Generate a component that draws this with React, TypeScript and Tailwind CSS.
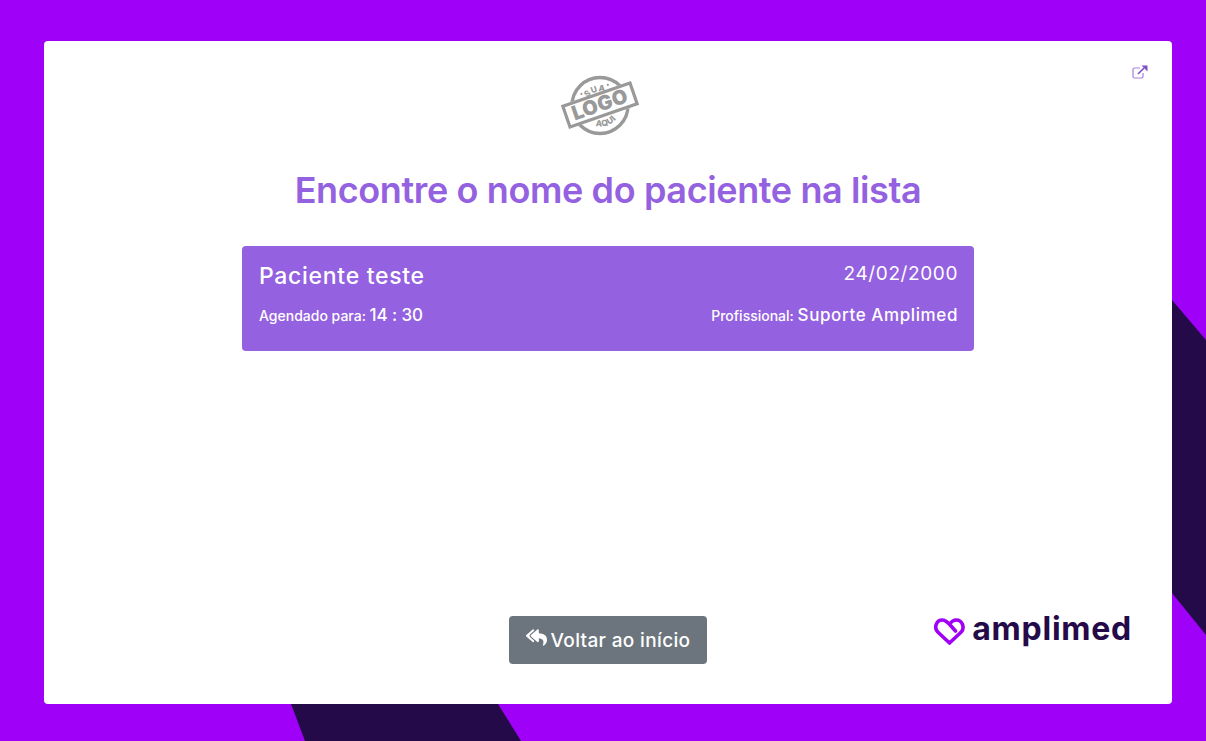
import { FaReplyAll } from "react-icons/fa";

const font = { fontFamily: "Inter, 'Noto Sans', sans-serif" };

function Background() {
  return (
    <svg className="absolute inset-0 h-full w-full" viewBox="0 0 1206 741" preserveAspectRatio="none">
      <polygon points="1172,300 1206,340 1206,635 1172,593" fill="#250a49" />
      <polygon points="291,704 498,704 521,741 305,741" fill="#250a49" />
    </svg>
  );
}

function SuaLogo() {
  return (
    <svg width="80" height="62" viewBox="0 0 80 62" className="block">
      <defs>
        <path id="arcTop" d="M 20 36.5 A 20 20 0 0 1 60 36.5" />
        <path id="arcBottom" d="M 18.5 30 A 21.5 21.5 0 0 0 61.5 30" />
      </defs>
      <circle cx="40" cy="30.5" r="28" fill="none" stroke="#999" strokeWidth="3.4" />
      <g transform="rotate(-19 40 30)">
        <rect x="3" y="17.5" width="74" height="25" fill="#fff" />
        <rect x="4.5" y="19" width="71" height="22" fill="none" stroke="#999" strokeWidth="3.2" />
        <text x="40" y="36.5" textAnchor="middle" fontSize="20" fontWeight="900" fill="#999" fontFamily="Inter, sans-serif" letterSpacing="0.3">
          LOGO
        </text>
        <text fontSize="8.5" fontWeight="800" fill="#999" fontFamily="Inter, sans-serif" letterSpacing="0.8" textAnchor="middle">
          <textPath href="#arcTop" startOffset="50%">SUA</textPath>
        </text>
        <text fontSize="8.5" fontWeight="800" fill="#999" fontFamily="Inter, sans-serif" letterSpacing="0.4" textAnchor="middle">
          <textPath href="#arcBottom" startOffset="50%">AQUI</textPath>
        </text>
        <circle cx="26" cy="13.5" r="1.1" fill="#999" />
        <circle cx="54" cy="13.5" r="1.1" fill="#999" />
      </g>
    </svg>
  );
}

function ExternalIcon() {
  return (
    <svg width="16" height="14" viewBox="0 0 16 14" fill="none" className="block">
      <path d="M8 3H2.5A1.5 1.5 0 0 0 1 4.5v7A1.5 1.5 0 0 0 2.5 13h7a1.5 1.5 0 0 0 1.5-1.5V8" stroke="#a57fe0" strokeWidth="1.2" />
      <path d="M6 9 L12 3" stroke="#7d4fc4" strokeWidth="1.6" />
      <polygon points="9.5,0.5 15.5,0.5 15.5,6.5" fill="#7d4fc4" />
    </svg>
  );
}

function AmplimedLogo() {
  return (
    <div className="flex items-center gap-[7px]">
      <svg width="31" height="27" viewBox="0 0 31 27" fill="none" className="block">
        <path
          d="M15.5 25 L3.8 14 C-0.5 9.5 2.5 2 8.3 2 C11.5 2 13.5 4 17.5 8.5 L21.5 13 M15.5 25 L27.2 14 C31 10 28.5 2 22.2 2 C19.5 2 17.5 3.5 15.5 6"
          stroke="#a000f5"
          strokeWidth="3.6"
          strokeLinecap="round"
        />
      </svg>
      <span className="relative top-[-2px] text-[32px] leading-none font-bold tracking-[0.75px] text-[#250a49]">amplimed</span>
    </div>
  );
}

export default function App() {
  return (
    <div className="relative h-[741px] w-[1206px] overflow-hidden bg-[#9e00f8]" style={font}>
      <Background />
      <div className="relative pt-[41px] pl-[44px]">
        <div className="relative flex h-[663px] w-[1128px] flex-col items-center rounded-[4px] bg-white">
          <button className="absolute right-[24px] top-[24px]">
            <ExternalIcon />
          </button>
          <div className="mt-[34px] mr-[16px]">
            <SuaLogo />
          </div>
          <h1 className="mt-[32px] text-[36px] leading-[43px] font-semibold tracking-[-0.38px] text-[#9461e0]">
            Encontre o nome do paciente na lista
          </h1>
          <div className="mt-[34px] flex h-[105px] w-[732px] flex-col gap-[10px] rounded-[4px] bg-[#9461e0] pl-[17px] pr-[16px] pt-[15px] text-white">
            <div className="flex items-start justify-between">
              <span className="text-[23px] leading-[30px] font-medium tracking-[0.7px]">Paciente teste</span>
              <span className="text-[19px] leading-[25px] tracking-[0.6px]">24/02/2000</span>
            </div>
            <div className="mt-[2px] flex items-center justify-between">
              <span className="text-[14px] leading-[24px] font-medium">
                Agendado para: <span className="text-[17px] tracking-[-0.1px]">14 : 30</span>
              </span>
              <span className="text-[14px] leading-[24px] font-medium">
                Profissional: <span className="text-[17px] tracking-[0.6px]">Suporte Amplimed</span>
              </span>
            </div>
          </div>
          <div className="relative mt-auto mb-[40px] flex w-full items-end justify-center">
            <button className="flex h-[48px] w-[198px] items-center justify-center gap-[4px] rounded-[4px] bg-[#6c757d] pt-[2px] text-[19px] font-medium tracking-[0.35px] text-white">
              <FaReplyAll className="relative top-[-4px] text-[21px]" />
              Voltar ao início
            </button>
            <div className="absolute right-[40px] bottom-[17px]">
              <AmplimedLogo />
            </div>
          </div>
        </div>
      </div>
    </div>
  );
}
